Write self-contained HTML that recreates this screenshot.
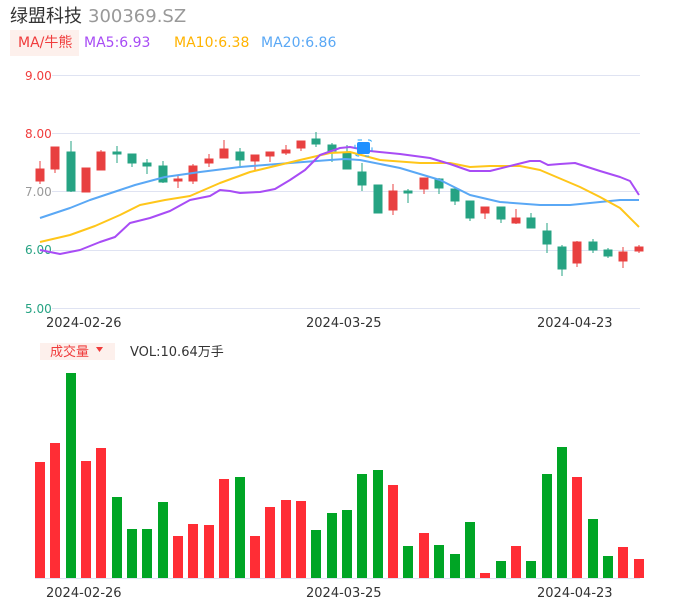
<!DOCTYPE html>
<html><head><meta charset="utf-8"><style>
body{margin:0;background:#fff;width:686px;height:606px;overflow:hidden;font-family:"Liberation Sans","Noto Sans CJK SC",sans-serif}
svg text{font-family:"DejaVu Sans","Noto Sans CJK SC",sans-serif}
</style></head><body>
<svg width="686" height="606" xmlns="http://www.w3.org/2000/svg">
<text x="10" y="22" font-size="18" fill="#333">绿盟科技</text>
<text x="88" y="22" font-size="18" fill="#999">300369.SZ</text>
<rect x="10" y="30" width="69" height="26" fill="#fdf0ec"/>
<text x="18" y="47" font-size="14" fill="#f03c3c">MA/牛熊</text>
<text x="84" y="47" font-size="14" fill="#a84cf5">MA5:6.93</text>
<text x="174" y="47" font-size="14" fill="#ffb300">MA10:6.38</text>
<text x="261" y="47" font-size="14" fill="#5aa8f5">MA20:6.86</text>
<g stroke="#dfe3f2" stroke-width="1">
<line x1="52" y1="75.5" x2="640" y2="75.5"/><line x1="52" y1="133.5" x2="640" y2="133.5"/><line x1="52" y1="191.5" x2="640" y2="191.5"/><line x1="52" y1="250.5" x2="640" y2="250.5"/><line x1="52" y1="308.5" x2="640" y2="308.5"/>
<line x1="35" y1="578.5" x2="640" y2="578.5"/>
</g>
<g font-size="12">
<text x="25" y="80" fill="#f03c3c">9.00</text>
<text x="25" y="138" fill="#f03c3c">8.00</text>
<text x="25" y="196" fill="#999">7.00</text>
<text x="25" y="254" fill="#26a383">6.00</text>
<text x="25" y="313" fill="#26a383">5.00</text>
</g>
<g font-size="13" fill="#333">
<text x="46" y="327">2024-02-26</text><text x="306" y="327">2024-03-25</text><text x="537" y="327">2024-04-23</text>
<text x="46" y="597">2024-02-26</text><text x="306" y="597">2024-03-25</text><text x="537" y="597">2024-04-23</text>
</g>
<!-- candles -->
<g stroke-width="1">
<g fill="#e84040" stroke="#e84040">
<line x1="40" y1="161" x2="40" y2="184"/><rect x="36" y="169" width="8" height="12"/>
<line x1="55" y1="147" x2="55" y2="173"/><rect x="51" y="147" width="8" height="22"/>
<line x1="86" y1="168" x2="86" y2="192"/><rect x="82" y="168" width="8" height="24"/>
<line x1="101" y1="150" x2="101" y2="170"/><rect x="97" y="152" width="8" height="18"/>
<line x1="178" y1="176" x2="178" y2="188"/><rect x="174" y="179" width="8" height="2"/>
<line x1="193" y1="164" x2="193" y2="184"/><rect x="189" y="166" width="8" height="15"/>
<line x1="209" y1="154" x2="209" y2="167"/><rect x="205" y="159" width="8" height="4"/>
<line x1="224" y1="140" x2="224" y2="158"/><rect x="220" y="149" width="8" height="9"/>
<line x1="255" y1="155" x2="255" y2="170"/><rect x="251" y="155" width="8" height="6"/>
<line x1="270" y1="152" x2="270" y2="162"/><rect x="266" y="152" width="8" height="4"/>
<line x1="286" y1="145" x2="286" y2="155"/><rect x="282" y="150" width="8" height="3"/>
<line x1="301" y1="141" x2="301" y2="151"/><rect x="297" y="141" width="8" height="7"/>
<line x1="393" y1="184" x2="393" y2="215"/><rect x="389" y="191" width="8" height="19"/>
<line x1="424" y1="178" x2="424" y2="194"/><rect x="420" y="178" width="8" height="11"/>
<line x1="485" y1="207" x2="485" y2="219"/><rect x="481" y="207" width="8" height="6"/>
<line x1="516" y1="209" x2="516" y2="224"/><rect x="512" y="218" width="8" height="5"/>
<line x1="577" y1="241" x2="577" y2="267"/><rect x="573" y="242" width="8" height="21"/>
<line x1="623" y1="247" x2="623" y2="268"/><rect x="619" y="252" width="8" height="9"/>
<line x1="639" y1="245" x2="639" y2="253"/><rect x="635" y="247" width="8" height="4"/>
</g>
<g fill="#26a383" stroke="#26a383">
<line x1="71" y1="141" x2="71" y2="192"/><rect x="67" y="152" width="8" height="39"/>
<line x1="117" y1="146" x2="117" y2="163"/><rect x="113" y="152" width="8" height="2"/>
<line x1="132" y1="154" x2="132" y2="167"/><rect x="128" y="154" width="8" height="9"/>
<line x1="147" y1="159" x2="147" y2="174"/><rect x="143" y="163" width="8" height="3"/>
<line x1="163" y1="161" x2="163" y2="183"/><rect x="159" y="166" width="8" height="16"/>
<line x1="240" y1="148" x2="240" y2="168"/><rect x="236" y="152" width="8" height="8"/>
<line x1="316" y1="132" x2="316" y2="147"/><rect x="312" y="139" width="8" height="5"/>
<line x1="332" y1="143" x2="332" y2="162"/><rect x="328" y="145" width="8" height="6"/>
<line x1="347" y1="145" x2="347" y2="169"/><rect x="343" y="152" width="8" height="17"/>
<line x1="362" y1="163" x2="362" y2="191"/><rect x="358" y="172" width="8" height="13"/>
<line x1="378" y1="185" x2="378" y2="213"/><rect x="374" y="185" width="8" height="28"/>
<line x1="408" y1="189" x2="408" y2="203"/><rect x="404" y="191" width="8" height="2"/>
<line x1="439" y1="178" x2="439" y2="194"/><rect x="435" y="179" width="8" height="9"/>
<line x1="455" y1="189" x2="455" y2="205"/><rect x="451" y="189" width="8" height="12"/>
<line x1="470" y1="201" x2="470" y2="221"/><rect x="466" y="201" width="8" height="17"/>
<line x1="501" y1="207" x2="501" y2="223"/><rect x="497" y="207" width="8" height="12"/>
<line x1="531" y1="213" x2="531" y2="228"/><rect x="527" y="218" width="8" height="10"/>
<line x1="547" y1="223" x2="547" y2="253"/><rect x="543" y="231" width="8" height="13"/>
<line x1="562" y1="245" x2="562" y2="276"/><rect x="558" y="247" width="8" height="22"/>
<line x1="593" y1="239" x2="593" y2="253"/><rect x="589" y="242" width="8" height="8"/>
<line x1="608" y1="248" x2="608" y2="258"/><rect x="604" y="250" width="8" height="6"/>
</g>
</g>
<g fill="none" stroke-width="2" stroke-linejoin="round">
<polyline stroke="#5aa8f5" points="40,218 70,208 90,200 120,190 135,185 165,177 200,172 240,167 290,163 330,160 345,159 360,160 400,168 440,180 470,195 500,202 540,205 570,205 600,202 620,200 639,200"/>
<polyline stroke="#ffc61a" points="40,242 70,235 95,226 120,215 140,205 165,200 190,196 220,183 250,172 300,160 330,153 350,152 380,160 420,163 450,163 470,167 490,166 520,166 540,170 580,187 600,197 620,208 639,227"/>
<polyline stroke="#a84cf5" points="40,250 60,254 80,250 100,242 115,237 130,223 150,218 170,211 190,200 210,196 220,190 230,191 240,193 260,192 275,189 290,180 305,170 320,155 340,148 350,147 370,151 400,154 430,158 450,164 470,171 490,171 510,166 530,161 540,161 548,165 560,164 575,163 600,171 620,177 630,181 639,195"/>
</g>
<rect x="355" y="140" width="17" height="16" rx="3" fill="none" stroke="#27a4f5" stroke-width="1" stroke-dasharray="4 6"/>
<rect x="357" y="142" width="13" height="12" rx="2" fill="#1e90ff"/>
<!-- volume -->
<rect x="40" y="343" width="75" height="17" fill="#fdf0ec"/>
<text x="50" y="356" font-size="13" fill="#f03c3c">成交量</text>
<path d="M96 347 L103 347 L99.5 352 Z" fill="#f03c3c"/>
<text x="130" y="356" font-size="13" fill="#333">VOL:10.64万手</text>
<g fill="#ff2d35">
<rect x="35" y="462" width="10" height="116"/><rect x="50" y="443" width="10" height="135"/><rect x="81" y="461" width="10" height="117"/><rect x="96" y="448" width="10" height="130"/>
<rect x="173" y="536" width="10" height="42"/><rect x="188" y="524" width="10" height="54"/><rect x="204" y="525" width="10" height="53"/><rect x="219" y="479" width="10" height="99"/>
<rect x="250" y="536" width="10" height="42"/><rect x="265" y="507" width="10" height="71"/><rect x="281" y="500" width="10" height="78"/><rect x="296" y="501" width="10" height="77"/>
<rect x="388" y="485" width="10" height="93"/><rect x="419" y="533" width="10" height="45"/><rect x="480" y="573" width="10" height="5"/><rect x="511" y="546" width="10" height="32"/>
<rect x="572" y="477" width="10" height="101"/><rect x="618" y="547" width="10" height="31"/><rect x="634" y="559" width="10" height="19"/>
</g>
<g fill="#00a525">
<rect x="66" y="373" width="10" height="205"/><rect x="112" y="497" width="10" height="81"/><rect x="127" y="529" width="10" height="49"/><rect x="142" y="529" width="10" height="49"/><rect x="158" y="502" width="10" height="76"/>
<rect x="235" y="477" width="10" height="101"/><rect x="311" y="530" width="10" height="48"/><rect x="327" y="513" width="10" height="65"/><rect x="342" y="510" width="10" height="68"/><rect x="357" y="474" width="10" height="104"/><rect x="373" y="470" width="10" height="108"/>
<rect x="403" y="546" width="10" height="32"/><rect x="434" y="545" width="10" height="33"/><rect x="450" y="554" width="10" height="24"/><rect x="465" y="522" width="10" height="56"/><rect x="496" y="561" width="10" height="17"/><rect x="526" y="561" width="10" height="17"/>
<rect x="542" y="474" width="10" height="104"/><rect x="557" y="447" width="10" height="131"/><rect x="588" y="519" width="10" height="59"/><rect x="603" y="556" width="10" height="22"/>
</g>
</svg>
</body></html>
